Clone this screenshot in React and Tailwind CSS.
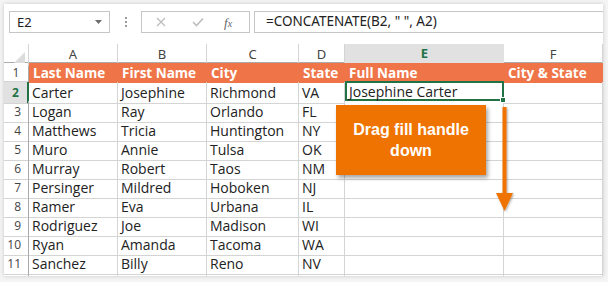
const cols = ["A", "B", "C", "D", "E", "F"];
const widths = "grid-cols-[25px_89px_89px_92px_46px_159px_99px]";

const data = [
  ["Carter", "Josephine", "Richmond", "VA"],
  ["Logan", "Ray", "Orlando", "FL"],
  ["Matthews", "Tricia", "Huntington", "NY"],
  ["Muro", "Annie", "Tulsa", "OK"],
  ["Murray", "Robert", "Taos", "NM"],
  ["Persinger", "Mildred", "Hoboken", "NJ"],
  ["Ramer", "Eva", "Urbana", "IL"],
  ["Rodriguez", "Joe", "Madison", "WI"],
  ["Ryan", "Amanda", "Tacoma", "WA"],
  ["Sanchez", "Billy", "Reno", "NV"],
];

const headers = ["Last Name", "First Name", "City", "State", "Full Name", "City & State"];

const App = () => {
  return (
    <div className="w-[608px] h-[282px] bg-[#f4f4f4] pt-[4px] pl-[4px]">
      <div className="relative w-[599px] h-[272px] bg-white overflow-hidden shadow-[0_0_4px_rgba(0,0,0,0.18)] font-['Noto_Sans',sans-serif]">
        {/* Barra de fórmulas */}
        <div className="h-[40px] flex items-start pt-[7px] pl-[5px]">
          <div className="w-[101px] h-[22px] border border-[#c6c6c6] flex items-center justify-between pl-[7px] pr-[7px]">
            <span className="text-[13px] text-[#222] leading-none">E2</span>
            <svg width="7" height="4" viewBox="0 0 7 4">
              <path d="M0 0 L7 0 L3.5 4 Z" fill="#6e6e6e" />
            </svg>
          </div>
          <div className="w-[31px] h-[22px] flex flex-col items-center justify-center gap-[2px]">
            <div className="w-[2px] h-[2px] bg-[#9a9a9a]" />
            <div className="w-[2px] h-[2px] bg-[#9a9a9a]" />
            <div className="w-[2px] h-[2px] bg-[#9a9a9a]" />
          </div>
          <div className="w-[109px] h-[22px] border border-[#c6c6c6] flex items-center">
            <svg className="ml-[14px]" width="10" height="10" viewBox="0 0 10 10">
              <path d="M1 1 L9 9 M9 1 L1 9" stroke="#bdbdbd" strokeWidth="1.3" />
            </svg>
            <svg className="ml-[26px]" width="12" height="10" viewBox="0 0 12 10">
              <path d="M1 5 L4.5 8.5 L11 1.5" stroke="#bdbdbd" strokeWidth="1.6" fill="none" />
            </svg>
            <span className="ml-[20px] text-[13px] italic text-[#666] font-['Liberation_Serif',serif] leading-none">
              f<span className="text-[10px]">x</span>
            </span>
          </div>
          <div className="ml-[4px] flex-1 h-[22px] border border-r-0 border-[#c6c6c6] flex items-center pl-[11px]">
            <span className="text-[13.5px] text-[#222] leading-none">=CONCATENATE(B2, " ", A2)</span>
          </div>
        </div>

        {/* Cabeçalho das colunas */}
        <div className={`grid ${widths} h-[19px] border-b border-[#ababab]`}>
          <div className="relative border-r border-[#d4d4d4]">
            <svg className="absolute right-[3px] bottom-[3px]" width="11" height="11" viewBox="0 0 11 11">
              <path d="M11 0 L11 11 L0 11 Z" fill="#dcdcdc" />
            </svg>
          </div>
          {cols.map((c) =>
            c === "E" ? (
              <div
                key={c}
                className="bg-[#e1e1e1] border-b-2 border-[#217346] flex items-center justify-center text-[13px] font-bold text-[#217346]"
              >
                {c}
              </div>
            ) : (
              <div
                key={c}
                className="border-r border-[#d4d4d4] flex items-center justify-center text-[13px] text-[#444]"
              >
                {c}
              </div>
            )
          )}
        </div>

        {/* Linha 1 — cabeçalhos laranja */}
        <div className={`grid ${widths} h-[19px] border-b border-[#d4d4d4] font-['Open_Sans',sans-serif]`}>
          <div className="border-r border-[#ababab] flex items-center justify-center text-[12px] text-[#444]">1</div>
          {headers.map((h) => (
            <div key={h} className="bg-[#ef7548] flex items-center pl-[4px] text-[13.5px] font-bold text-white whitespace-nowrap">
              {h}
            </div>
          ))}
        </div>

        {/* Dados */}
        {data.map((row, i) => {
          const n = i + 2;
          const sel = n === 2;
          return (
            <div key={n} className={`grid ${widths} h-[19px] font-['Open_Sans',sans-serif]`}>
              <div
                className={
                  sel
                    ? "bg-[#e1e1e1] border-r-2 border-b border-r-[#217346] border-b-[#d4d4d4] flex items-center justify-center text-[12px] font-bold text-[#217346]"
                    : "border-r border-b border-r-[#ababab] border-b-[#d4d4d4] flex items-center justify-end pr-[7px] text-[12px] text-[#444]"
                }
              >
                {n}
              </div>
              {row.map((v, j) => (
                <div key={j} className="border-r border-b border-[#d4d4d4] flex items-center pl-[3px] text-[14px] text-[#222] whitespace-nowrap">
                  {v}
                </div>
              ))}
              {sel ? (
                <div className="relative border-2 border-[#217346] flex items-center pl-[2px] text-[14px] text-[#222] whitespace-nowrap -mt-[1px] h-[20px]">
                  Josephine Carter
                  <div className="absolute right-[-4px] bottom-[-4px] w-[6px] h-[6px] bg-[#217346] border border-white" />
                </div>
              ) : (
                <div className="border-r border-b border-[#d4d4d4]" />
              )}
              <div className="border-r border-b border-[#d4d4d4]" />
            </div>
          );
        })}

        {/* Linha parcial */}
        <div className={`grid ${widths} h-[19px]`}>
          <div className="border-r border-[#ababab]" />
          {cols.map((c) => (
            <div key={c} className="border-r border-[#d4d4d4]" />
          ))}
        </div>

        {/* Balão */}
        <div className="absolute left-[332px] top-[101px] w-[150px] h-[70px] bg-[#ef7300] shadow-[2px_3px_4px_rgba(0,0,0,0.35)] flex items-center justify-center text-center text-white font-bold text-[16px] leading-[21px] font-['Liberation_Sans',sans-serif]">
          Drag fill handle
          <br />
          down
        </div>

        {/* Seta */}
        <svg className="absolute left-[490px] top-[101px]" width="22" height="108" viewBox="0 0 22 108">
          <defs>
            <filter id="sh" x="-50%" y="-10%" width="200%" height="120%">
              <feDropShadow dx="1" dy="1" stdDeviation="1.2" floodColor="#000" floodOpacity="0.35" />
            </filter>
          </defs>
          <g filter="url(#sh)">
            <rect x="8.5" y="2" width="4" height="88" fill="#ef7300" />
            <path d="M2 88 L19 88 L10.5 106 Z" fill="#ef7300" />
          </g>
        </svg>
      </div>
    </div>
  );
};

export default App;
